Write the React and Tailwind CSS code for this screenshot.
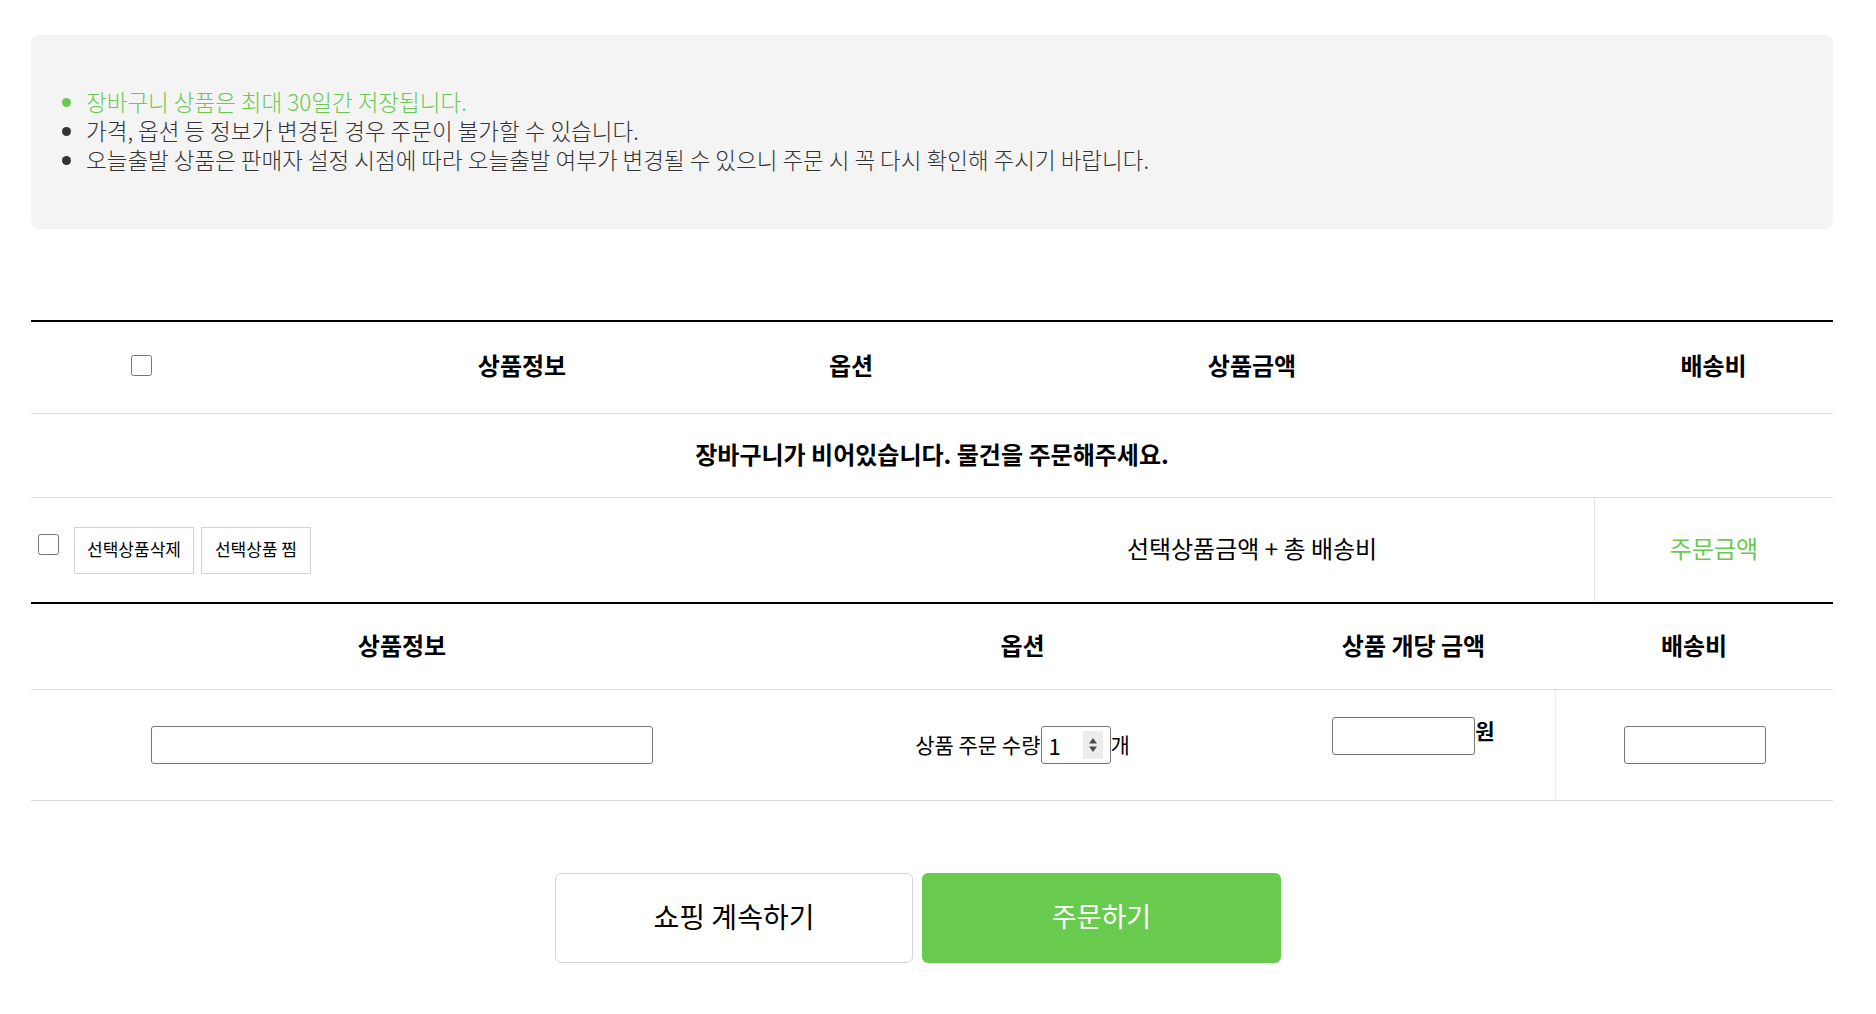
import React from 'react';

const notices = [
  { text: '장바구니 상품은 최대 30일간 저장됩니다.', green: true },
  { text: '가격, 옵션 등 정보가 변경된 경우 주문이 불가할 수 있습니다.' },
  { text: '오늘출발 상품은 판매자 설정 시점에 따라 오늘출발 여부가 변경될 수 있으니 주문 시 꼭 다시 확인해 주시기 바랍니다.' },
];

function Spinner() {
  return (
    <span className="flex h-[28px] w-[20px] flex-col items-center justify-center bg-[#ececec]">
      <svg width="10" height="20" viewBox="0 0 10 20">
        <path d="M5 3 L9 8.5 L1 8.5 Z" fill="#4a4a4a" />
        <path d="M5 17 L9 11.5 L1 11.5 Z" fill="#4a4a4a" />
      </svg>
    </span>
  );
}

export default function App() {
  return (
    <div className="min-h-screen bg-white font-['Noto_Sans_CJK_KR','Noto_Sans_KR',sans-serif] text-black">
      <div className="ml-[31px] w-[1802px] pt-[35px]">
        {/* Notice box */}
        <div className="rounded-[8px] bg-[#f4f4f4] pb-[55px] pl-[55px] pt-[52px]">
          <ul className="list-disc text-[22.5px] font-light leading-[29px]">
            {notices.map((n, i) => (
              <li key={i} className={n.green ? 'text-[#69c951]' : 'text-[#333333]'}>
                {n.text}
              </li>
            ))}
          </ul>
        </div>

        {/* Cart table */}
        <div className="mt-[91px] border-t-2 border-black">
          <div className="grid h-[92px] grid-cols-[221px_540px_118px_684px_239px] items-center border-b border-[#dcdcdc] pb-[6px] text-center text-[24px] font-bold">
            <div className="flex justify-center pt-[2px]">
              <input type="checkbox" className="h-[21px] w-[21px]" />
            </div>
            <div>상품정보</div>
            <div>옵션</div>
            <div>상품금액</div>
            <div>배송비</div>
          </div>
          <div className="flex h-[84px] items-center justify-center border-b border-[#dcdcdc] pb-[4px] text-[24px] font-bold">
            장바구니가 비어있습니다. 물건을 주문해주세요.
          </div>
          <div className="grid h-[104px] grid-cols-[221px_540px_118px_684px_239px]">
            <div className="col-span-3 flex items-center pl-[7px]">
              <input type="checkbox" className="mb-[12px] h-[21px] w-[21px]" />
              <button className="ml-[15px] h-[47px] w-[120px] border border-[#d4d4d4] bg-white pb-[2px] text-[17px]">
                선택상품삭제
              </button>
              <button className="ml-[7px] h-[47px] w-[110px] border border-[#d4d4d4] bg-white pb-[2px] text-[17px]">
                선택상품 찜
              </button>
            </div>
            <div className="flex items-center justify-center pb-[4px] text-[24px]">
              선택상품금액 + 총 배송비
            </div>
            <div className="flex items-center justify-center border-l border-[#e2e2e2] pb-[4px] text-[24px] text-[#69c951]">
              주문금액
            </div>
          </div>
        </div>

        {/* Order form table */}
        <div className="border-t-2 border-black">
          <div className="grid h-[86px] grid-cols-[742px_499px_283px_278px] items-center border-b border-[#dcdcdc] pb-[4px] text-center text-[24px] font-bold">
            <div>상품정보</div>
            <div>옵션</div>
            <div>상품 개당 금액</div>
            <div>배송비</div>
          </div>
          <div className="grid h-[111px] grid-cols-[742px_499px_283px_278px] border-b border-[#dcdcdc]">
            <div className="flex items-center justify-center">
              <input type="text" className="h-[38px] w-[502px] rounded-[3px] border border-[#767676]" />
            </div>
            <div className="flex items-center justify-center text-[21px]">
              <span>상품 주문 수량</span>
              <div className="flex h-[38px] w-[70px] items-center justify-between rounded-[3px] border border-[#767676] pl-[7px] pr-[7px]">
                <span className="text-[22px] leading-none">1</span>
                <Spinner />
              </div>
              <span>개</span>
            </div>
            <div className="flex items-center justify-center pb-[18px]">
              <input type="text" className="h-[38px] w-[143px] rounded-[3px] border border-[#767676]" />
              <span className="mb-[10px] text-[21px] font-bold">원</span>
            </div>
            <div className="flex items-center justify-center border-l border-[#ececec]">
              <input type="text" className="h-[38px] w-[142px] rounded-[3px] border border-[#767676]" />
            </div>
          </div>
        </div>

        {/* Actions */}
        <div className="mt-[72px] flex justify-center gap-[9px] pr-[28px]">
          <button className="h-[90px] w-[358px] rounded-[6px] border border-[#d6d6d6] bg-white pb-[4px] text-[28px]">
            쇼핑 계속하기
          </button>
          <button className="h-[90px] w-[359px] rounded-[6px] bg-[#69cb4d] pb-[4px] text-[27px] text-white">
            주문하기
          </button>
        </div>
      </div>
    </div>
  );
}
